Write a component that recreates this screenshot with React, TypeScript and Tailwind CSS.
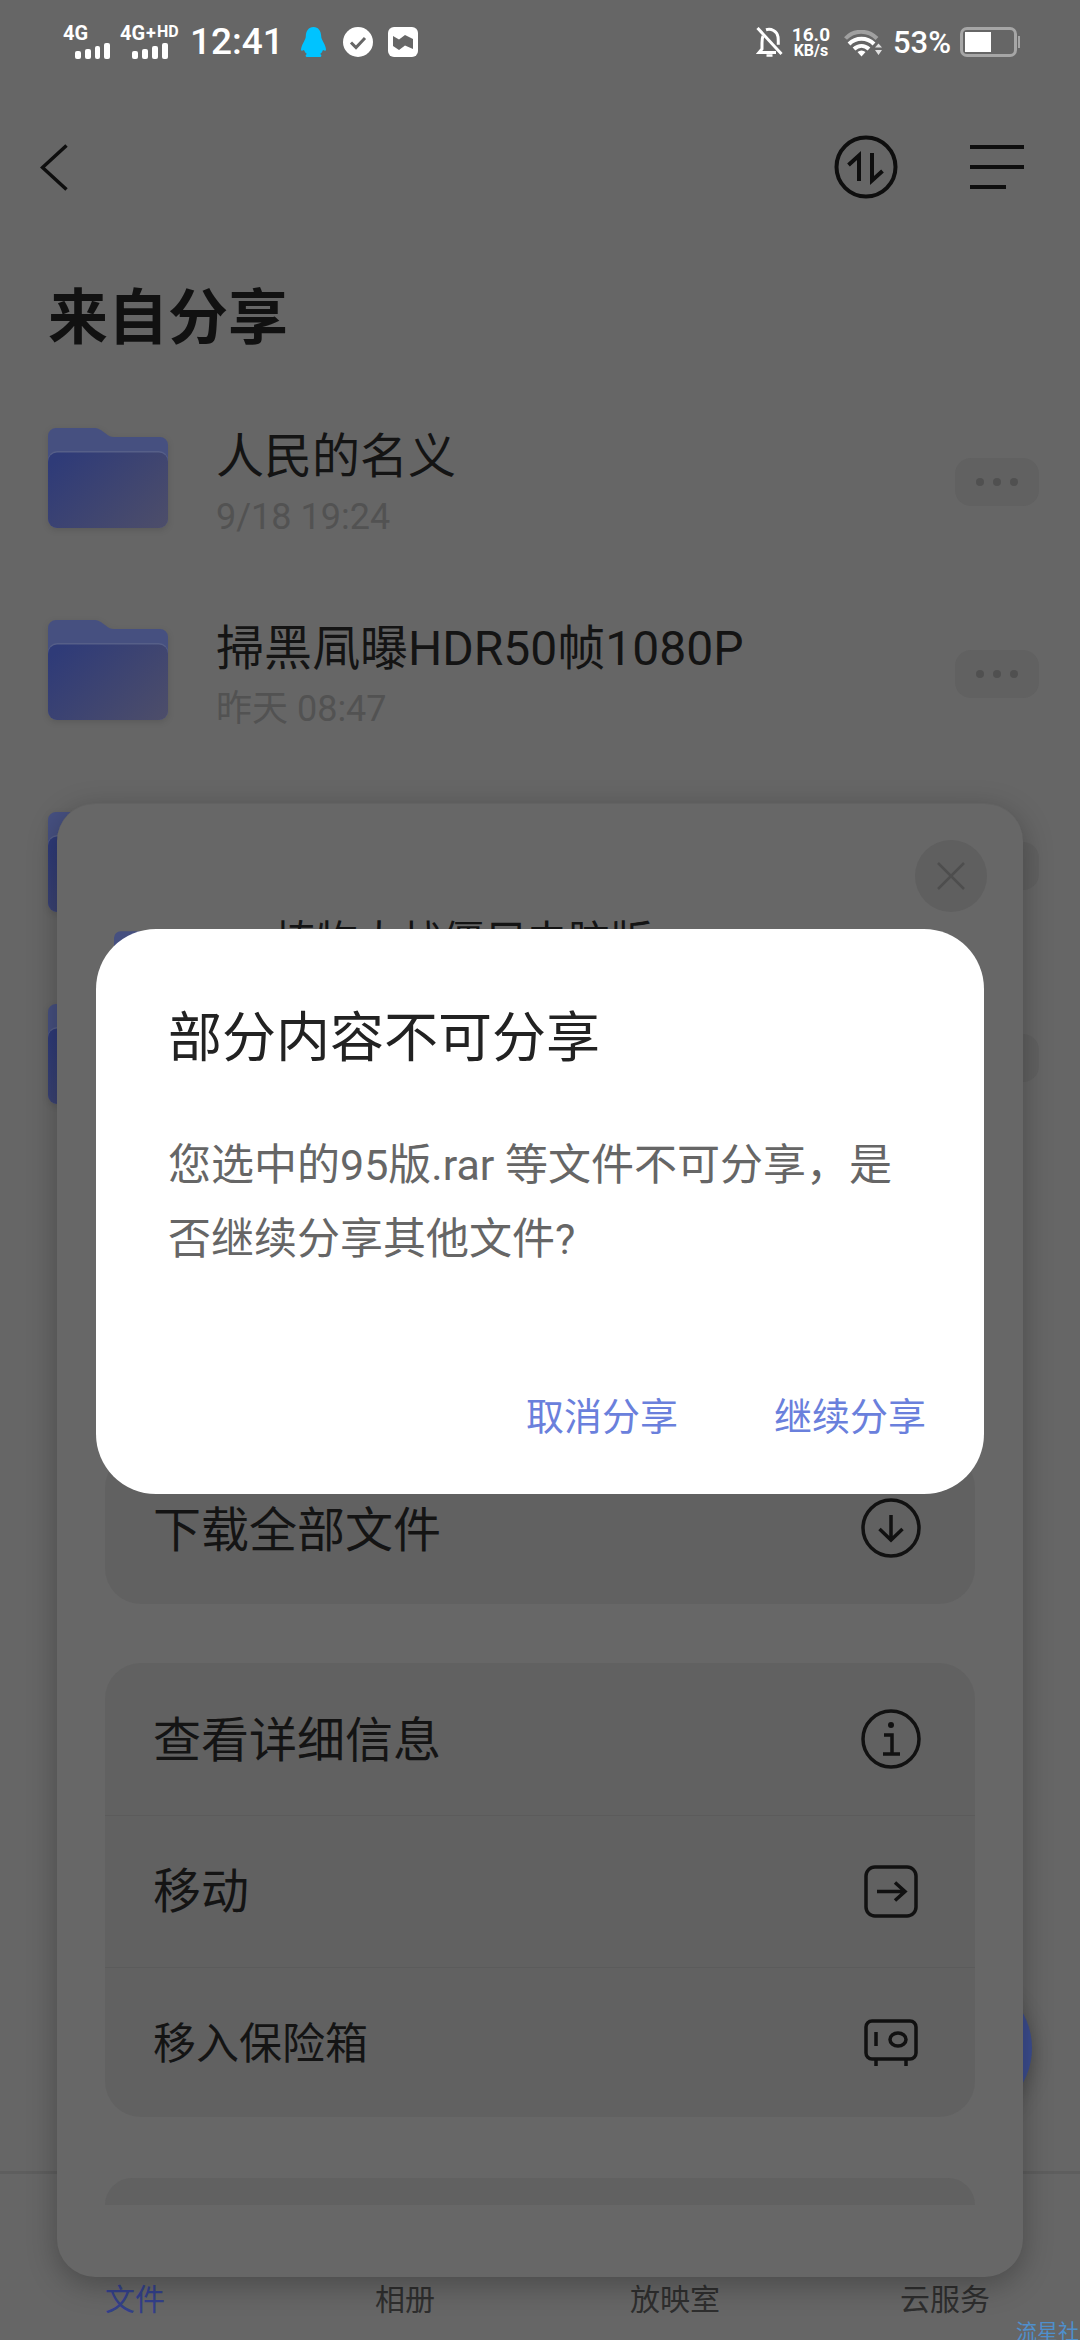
const FolderIcon = ({ id, className }: { id: string; className: string }) => (
    <svg viewBox="0 0 120 100" className={className}>
        <defs>
            <linearGradient id={`${id}-front`} x1="0" y1="0.2" x2="1" y2="0.9">
                <stop offset="0" stopColor="#2f3b78" />
                <stop offset="1" stopColor="#4c4d6a" />
            </linearGradient>
        </defs>
        <path d="M0 92V8a8 8 0 0 1 8-8h37c6 0 8 2 12 5s5 4 10 4h45a8 8 0 0 1 8 8v75z" fill="#465080" />
        <rect x="0" y="23" width="120" height="77" rx="9" fill="#565f88" />
        <rect x="0" y="24.500" width="120" height="75.500" rx="9" fill={`url(#${id}-front)`} />
    </svg>
);

const SignalBars = () => (
    <div className="flex items-end gap-[4px]">
        <span className="h-[8px] w-[6px] rounded-[2px] bg-white" />
        <span className="h-[10px] w-[6px] rounded-[2px] bg-white" />
        <span className="h-[13px] w-[6px] rounded-[2px] bg-white" />
        <span className="h-[16px] w-[6px] rounded-[2px] bg-white" />
    </div>
);

const StatusBar = () => (
    <div className="flex h-[84px] items-start justify-between pl-[63px] pr-[60px] pt-[27px] font-['Roboto',sans-serif] text-white">
        <div className="flex items-start">
            <div className="flex w-[47px] flex-col">
                <span className="h-[13px] text-[20px] font-bold leading-[13px]">4G</span>
                <div className="ml-[12px] mt-[3px]">
                    <SignalBars />
                </div>
            </div>
            <div className="ml-[10px] flex w-[58px] flex-col">
                <div className="flex h-[13px] items-start whitespace-nowrap text-[20px] font-bold leading-[13px]">
                    <span>4G</span>
                    <span className="-mt-[1px] ml-[1px] text-[18px]">+</span>
                    <span className="-mt-[2px] ml-[1px] text-[16px]">HD</span>
                </div>
                <div className="ml-[12px] mt-[3px]">
                    <SignalBars />
                </div>
            </div>
            <span className="ml-[12px] text-[37px] font-medium leading-[30px]">12:41</span>
            <svg viewBox="0 0 25 30" className="ml-[17px] h-[30px] w-[25px]">
                <path
                    d="M12.5 0C7.5 0 5 4 4.8 9c0 2-.8 3.500-1.800 5.500C1 18 0 21 0 23c0 1 1.500 1 3 0 .5 1.500 1.500 3 3 4-1.500.7-2 2-.5 3h14c1.500-1 1-2.300-.5-3 1.500-1 2.500-2.500 3-4 1.500 1 3 1 3 0 0-2-1-5-3-8.500-1-2-1.800-3.500-1.800-5.500C20 4 17.500 0 12.500 0z"
                    fill="#00c3ff"
                />
            </svg>
            <svg viewBox="0 0 30 30" className="ml-[17px] h-[30px] w-[30px]">
                <circle cx="15" cy="15" r="15" fill="#fff" />
                <path d="M8 15.500l5 5 9-9.500" fill="none" stroke="#666" strokeWidth="3" />
            </svg>
            <svg viewBox="0 0 30 30" className="ml-[15px] h-[30px] w-[30px]">
                <rect width="30" height="30" rx="6" fill="#fff" />
                <path d="M5 9l6 3.500L17 8l8 4v10l-8-3.500-6 4.500-6-4z" fill="#666" />
            </svg>
        </div>
        <div className="flex items-start">
            <svg viewBox="0 0 27 30" className="h-[30px] w-[27px]" fill="none" stroke="#fff" strokeWidth="3">
                <path d="M7 9c-1 2-1 4-1 7v6l-3 3.500h17" />
                <path d="M10 2.800c5-1.500 11 1 12 7 .3 2 .3 5 .3 8" />
                <path d="M1.500 1l24 26" />
                <path d="M10.500 28.500h6" strokeWidth="2.500" />
            </svg>
            <div className="ml-[10px] flex w-[36px] flex-col items-center font-bold">
                <span className="h-[16px] text-[19px] leading-[16px]">16.0</span>
                <span className="mt-[2px] h-[12px] text-[16px] leading-[12px]">KB/s</span>
            </div>
            <svg viewBox="0 0 38 27" className="ml-[15px] mt-[3px] h-[27px] w-[38px]" fill="none">
                <path d="M1.500 8.500C10 -0.500 24 -0.500 33 8.500" stroke="#a0a0a0" strokeWidth="4" />
                <path d="M5 14c7-7 18-7 25 0" stroke="#fff" strokeWidth="4" />
                <path d="M10 19c4.500-4 10.500-4 15 0" stroke="#fff" strokeWidth="4" />
                <path d="M13.500 22c2.500-2 5.500-2 8 0l-4 4.500z" fill="#fff" />
                <path d="M31 17.500l3.500-4 3.500 4zM31 20h7l-3.500 5z" fill="#e0e0e0" />
            </svg>
            <span className="ml-[11px] mt-[1px] text-[31px] font-medium leading-[30px]">53%</span>
            <div className="ml-[9px] flex items-center">
                <div className="h-[30px] w-[57px] rounded-[7px] border-[3px] border-[#a6a6a6] p-[2px]">
                    <div className="h-full w-[26px] bg-white" />
                </div>
                <span className="ml-[1px] h-[12px] w-[2px] bg-[#a6a6a6]" />
            </div>
        </div>
    </div>
);

const NavBar = () => (
    <div className="flex h-[166px] items-center justify-between pl-[40px] pr-[56px]">
        <svg viewBox="0 0 28 47" className="h-[47px] w-[28px]" fill="none" stroke="#0e0e0e" strokeWidth="3.500">
            <path d="M26.500 1.500L2.500 23.500l24 22" />
        </svg>
        <div className="flex items-center gap-[72px]">
            <svg viewBox="0 0 64 64" className="h-[64px] w-[64px]" fill="none" stroke="#0e0e0e" strokeWidth="4">
                <circle cx="32" cy="32" r="29.500" />
                <path d="M25 46V20.500L14.500 30" />
                <path d="M38 18v27.500L48.500 36" />
            </svg>
            <div className="flex w-[54px] flex-col gap-[16px]">
                <span className="h-[4px] w-[54px] bg-[#0e0e0e]" />
                <span className="h-[4px] w-[54px] bg-[#0e0e0e]" />
                <span className="h-[4px] w-[36px] bg-[#0e0e0e]" />
            </div>
        </div>
    </div>
);

const MoreButton = () => (
    <div className="mt-[8px] flex h-[48px] w-[84px] items-center justify-center gap-[9px] rounded-[16px] bg-[#616161]">
        <span className="h-[8px] w-[8px] rounded-full bg-[#505050]" />
        <span className="h-[8px] w-[8px] rounded-full bg-[#505050]" />
        <span className="h-[8px] w-[8px] rounded-full bg-[#505050]" />
    </div>
);

const FileRow = ({ id, name, date }: { id: string; name?: string; date?: string }) => (
    <div className="flex h-[192px] items-center pl-[48px] pr-[41px]">
        <FolderIcon id={id} className="h-[100px] w-[120px] drop-shadow-[0_2px_3px_rgba(0,0,0,0.12)]" />
        <div className="ml-[48px] flex flex-1 flex-col gap-[8px] pt-[9px]">
            <span className="text-[48px] leading-[60px] text-[#141414]">{name}</span>
            <span className="text-[36px] leading-[44px] text-[#525252]">{date}</span>
        </div>
        <MoreButton />
    </div>
);

const iconStroke = '#111111';

const DownloadIcon = () => (
    <svg viewBox="0 0 60 60" className="h-[60px] w-[60px]" fill="none" stroke={iconStroke} strokeWidth="3.500">
        <circle cx="30" cy="30" r="28" />
        <path d="M30 17v25M18.500 31L30 42l11.500-11" />
    </svg>
);

const InfoIcon = () => (
    <svg viewBox="0 0 60 60" className="h-[60px] w-[60px]" fill="none" stroke={iconStroke} strokeWidth="3.500">
        <circle cx="30" cy="30" r="28" />
        <circle cx="30" cy="16" r="3" fill={iconStroke} stroke="none" />
        <path d="M23 26h8v19M22 45h17" />
    </svg>
);

const MoveIcon = () => (
    <svg viewBox="0 0 54 53" className="h-[53px] w-[54px]" fill="none" stroke={iconStroke} strokeWidth="3.500">
        <rect x="2" y="2" width="50" height="49" rx="9" />
        <path d="M13 26.500h28M31 17.500l10 9-10 9" />
    </svg>
);

const SafeIcon = () => (
    <svg viewBox="0 0 54 47" className="h-[47px] w-[54px]" fill="none" stroke={iconStroke} strokeWidth="3.500">
        <rect x="2" y="2" width="50" height="38" rx="6" />
        <path d="M12 40v7M42 40v7M12 13v14" />
        <ellipse cx="34" cy="20.500" rx="8" ry="6.500" />
    </svg>
);

const ActionRow = ({
    label,
    icon,
    className,
    labelClassName
}: {
    label: string;
    icon: React.ReactNode;
    className: string;
    labelClassName: string;
}) => (
    <div className={`flex items-center justify-between pl-[48px] pr-[54px] text-[#141414] ${className}`}>
        <span className={labelClassName}>{label}</span>
        <div className="flex w-[60px] justify-center">{icon}</div>
    </div>
);

const ShareSheet = () => (
    <div className="absolute left-[57px] top-[803px] flex h-[1474px] w-[966px] flex-col rounded-[38px] border-t border-[#626262] bg-[#676767] px-[48px] shadow-[0_8px_30px_rgba(0,0,0,0.28)]">
        <div className="flex h-[109px] justify-end pt-[36px]">
            <div className="-mr-[12px] flex h-[72px] w-[72px] items-center justify-center rounded-full bg-[#5f5f5f]">
                <svg viewBox="0 0 30 30" className="h-[30px] w-[30px]" fill="none" stroke="#4e4e4e" strokeWidth="2.500">
                    <path d="M2 2l26 26M28 2L2 28" />
                </svg>
            </div>
        </div>
        <div className="flex h-[539px] items-start pl-[9px]">
            <FolderIcon id="sheet" className="mt-[18px] h-[84px] w-[100px]" />
            <span className="ml-[60px] mt-[8px] text-[42px] leading-[42px] text-[#141414]">植物大战僵尸电脑版</span>
        </div>
        <div className="rounded-[36px] bg-[#616161]">
            <ActionRow label="下载全部文件" icon={<DownloadIcon />} className="h-[152px]" labelClassName="pt-[5px] text-[48px]" />
        </div>
        <div className="mt-[59px] flex flex-col divide-y divide-[#5b5b5b] rounded-[36px] bg-[#616161]">
            <ActionRow label="查看详细信息" icon={<InfoIcon />} className="h-[153px]" labelClassName="pt-[3px] text-[48px]" />
            <ActionRow label="移动" icon={<MoveIcon />} className="h-[152px]" labelClassName="text-[48px]" />
            <ActionRow label="移入保险箱" icon={<SafeIcon />} className="h-[149px]" labelClassName="pt-[3px] text-[43px]" />
        </div>
        <div className="mt-[61px] h-[27px] rounded-t-[36px] bg-[#616161]" />
    </div>
);

const ConfirmDialog = () => (
    <div className="absolute left-[96px] top-[929px] flex h-[565px] w-[888px] flex-col rounded-[60px] bg-white pl-[72px] pr-[58px]">
        <h2 className="mt-[76px] text-[54px] font-normal leading-[68px] text-[#222222]">部分内容不可分享</h2>
        <p className="mt-[55px] text-[43px] leading-[74px] text-[#666666]">
            您选中的95版.rar 等文件不可分享，是
            <br />
            否继续分享其他文件?
        </p>
        <div className="mt-auto flex justify-end gap-[96px] pb-[52px] text-[38px] leading-[50px] text-[#6a80dc]">
            <span>取消分享</span>
            <span>继续分享</span>
        </div>
    </div>
);

const tabs = ['文件', '相册', '放映室', '云服务'];

const TabBar = () => (
    <div className="mt-auto grid h-[169px] grid-cols-4 items-end border-t-[3px] border-[#5e5e5e] pb-[24px] text-center text-[30px] leading-[32px]">
        {tabs.map((tab, index) => (
            <span key={tab} className={index === 0 ? 'text-[#33408a]' : 'text-[#2e2e2e]'}>
                {tab}
            </span>
        ))}
    </div>
);

const App = () => {
    return (
        <div className="relative flex h-[2340px] w-[1080px] flex-col overflow-hidden bg-[#666666] font-['Roboto','Noto_Sans_CJK_SC',sans-serif]">
            <StatusBar />
            <NavBar />
            <h1 className="ml-[48px] mt-[21px] text-[60px] font-bold leading-[96px] text-[#111111]">来自分享</h1>
            <div className="mt-[15px] flex flex-col">
                <FileRow id="f1" name="人民的名义" date="9/18 19:24" />
                <FileRow id="f2" name="掃黑凬曝HDR50帧1080P" date="昨天 08:47" />
                <FileRow id="f3" />
                <FileRow id="f4" />
            </div>
            <TabBar />
            <div className="absolute left-[888px] top-[1976px] h-[144px] w-[144px] rounded-full bg-[#3c4d8f] shadow-[0_6px_20px_rgba(0,0,0,0.25)]" />
            <ShareSheet />
            <ConfirmDialog />
            <span className="absolute bottom-[-4px] left-[1016px] whitespace-nowrap text-[21px] leading-[24px] text-[#4f8fcc]">流星社区</span>
        </div>
    );
};

export default App;
